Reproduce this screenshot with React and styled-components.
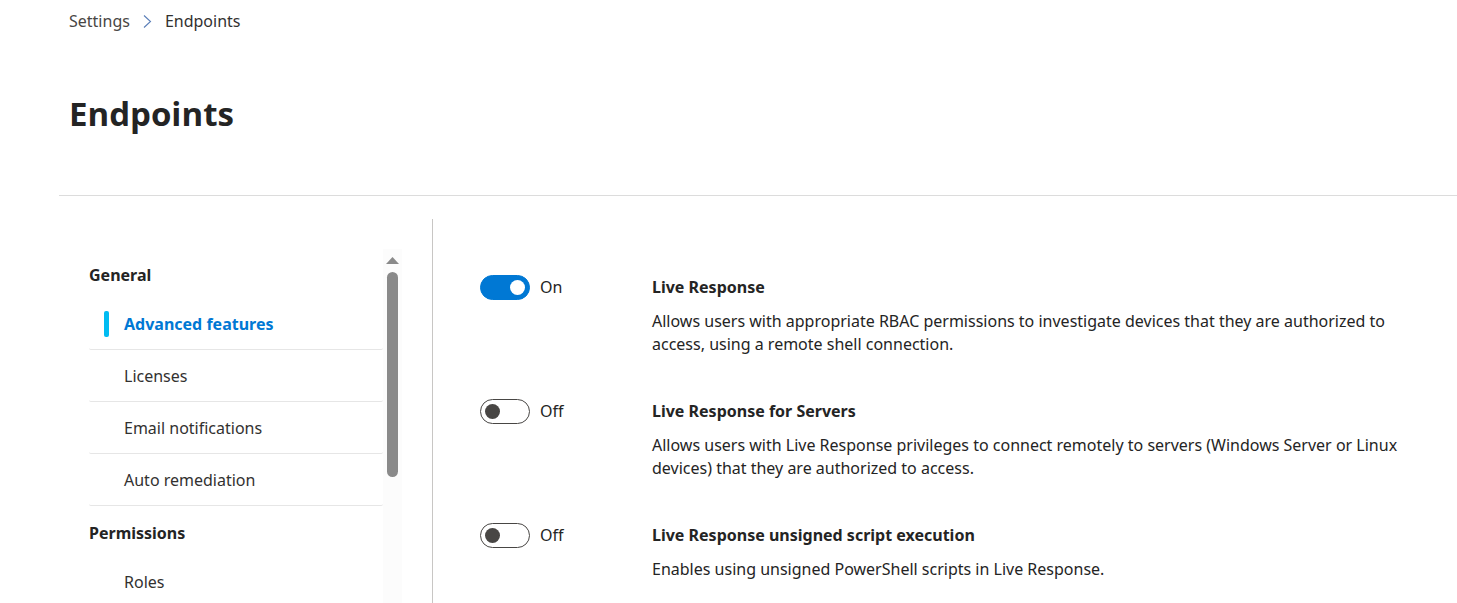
import React, { useState } from "react";
import styled, { createGlobalStyle } from "styled-components";

const GlobalStyle = createGlobalStyle`
  *, *::before, *::after { box-sizing: border-box; }
  body {
    margin: 0;
    background: #ffffff;
    color: #242424;
    font-family: "Segoe UI", "Noto Sans", sans-serif;
    font-size: 16px;
    line-height: 23px;
  }
`;

const Page = styled.div`
  display: flex;
  flex-direction: column;
  height: 100vh;
  overflow: hidden;
  padding-left: 59px;
`;

const Header = styled.header`
  flex: none;
  padding: 10px 10px 58px;
  border-bottom: 1px solid #dcdcdc;
`;

const Breadcrumb = styled.nav`
  display: flex;
  align-items: center;
  gap: 13px;
`;

const Crumb = styled.a`
  color: ${(p) => (p.$current ? "#323130" : "#484644")};
  text-decoration: none;
`;

const Title = styled.h1`
  margin: 57px 0 0;
  font-family: "Segoe UI", "Open Sans", sans-serif;
  font-size: 33px;
  line-height: 47px;
  font-weight: 700;
`;

const Body = styled.div`
  display: flex;
  flex: 1;
  min-height: 0;
  padding-top: 23px;
`;

const Sidebar = styled.aside`
  display: flex;
  flex: none;
  width: 374px;
  padding: 29px 30px 0;
  border-right: 1px solid #c8c6c4;
`;

const Menu = styled.nav`
  flex: 1;
  overflow: hidden;
`;

const GroupTitle = styled.h2`
  height: 50px;
  margin: 0;
  padding-top: 16px;
  font-size: 16px;
  font-weight: 700;
`;

const MenuList = styled.ul`
  margin: 0;
  padding: 0;
  list-style: none;
`;

const MenuLink = styled.a`
  display: flex;
  align-items: center;
  height: 52px;
  padding: 1px 0 0 15px;
  border-bottom: 1px solid #e6e6e6;
  border-radius: 2px;
  color: ${(p) => (p.$active ? "#0078d4" : "#323130")};
  font-weight: ${(p) => (p.$active ? 700 : 400)};
  text-decoration: none;

  &::before {
    content: "";
    width: 5px;
    height: 26px;
    margin-right: 15px;
    border-radius: 2px;
    background: ${(p) => (p.$active ? "#00bcf2" : "transparent")};
  }
`;

const Scrollbar = styled.div`
  display: flex;
  flex: none;
  flex-direction: column;
  align-items: center;
  gap: 8px;
  width: 19px;
  margin-top: 1px;
  padding-top: 8px;
  background: #fcfcfc;
`;

const ScrollThumb = styled.div`
  width: 11px;
  height: 205px;
  border-radius: 6px;
  background: #8a8a8a;
`;

const Settings = styled.main`
  display: flex;
  flex: 1;
  flex-direction: column;
  gap: 44px;
  min-width: 0;
  padding: 57px 24px 0 47px;
`;

const Setting = styled.section`
  display: grid;
  flex: none;
  grid-template-columns: 172px 1fr;
`;

const SwitchLabel = styled.label`
  display: flex;
  align-items: center;
  align-self: start;
  gap: 10px;
  height: 23px;
  cursor: pointer;
`;

const Switch = styled.input`
  display: flex;
  align-items: center;
  appearance: none;
  width: 50px;
  height: 25px;
  margin: 0;
  padding: 0 4px;
  border: 1px solid #484644;
  border-radius: 13px;
  background: #ffffff;
  cursor: pointer;

  &::before {
    content: "";
    width: 15px;
    height: 15px;
    border-radius: 50%;
    background: #484644;
  }

  &:checked {
    justify-content: flex-end;
    border-color: #0078d4;
    background: #0078d4;
  }

  &:checked::before {
    background: #ffffff;
  }
`;

const SettingTitle = styled.h3`
  margin: 0 0 11px;
  font-size: 16px;
  line-height: 23px;
  font-weight: 700;
`;

const Description = styled.p`
  margin: 0;
`;

const groups = [
  {
    title: "General",
    items: ["Advanced features", "Licenses", "Email notifications", "Auto remediation"],
  },
  { title: "Permissions", items: ["Roles"] },
];

const settings = [
  {
    id: "live-response",
    title: "Live Response",
    text: "Allows users with appropriate RBAC permissions to investigate devices that they are authorized to access, using a remote shell connection.",
    on: true,
  },
  {
    id: "live-response-servers",
    title: "Live Response for Servers",
    text: "Allows users with Live Response privileges to connect remotely to servers (Windows Server or Linux devices) that they are authorized to access.",
    on: false,
  },
  {
    id: "live-response-unsigned",
    title: "Live Response unsigned script execution",
    text: "Enables using unsigned PowerShell scripts in Live Response.",
    on: false,
  },
];

function SettingRow({ setting }) {
  const [on, setOn] = useState(setting.on);
  return (
    <Setting>
      <SwitchLabel>
        <Switch
          type="checkbox"
          role="switch"
          checked={on}
          onChange={(e) => setOn(e.target.checked)}
          aria-describedby={setting.id}
        />
        {on ? "On" : "Off"}
      </SwitchLabel>
      <div>
        <SettingTitle id={setting.id}>{setting.title}</SettingTitle>
        <Description>{setting.text}</Description>
      </div>
    </Setting>
  );
}

export default function App() {
  const [active, setActive] = useState("Advanced features");
  return (
    <>
      <GlobalStyle />
      <Page>
        <Header>
          <Breadcrumb aria-label="Breadcrumb">
            <Crumb href="#settings">Settings</Crumb>
            <svg width="9" height="14" viewBox="0 0 9 14" fill="none" aria-hidden="true">
              <path d="M1 0.5 7.5 6.5 1 12.5" stroke="#5b7fb8" strokeWidth="1.1" />
            </svg>
            <Crumb href="#endpoints" $current aria-current="page">
              Endpoints
            </Crumb>
          </Breadcrumb>
          <Title>Endpoints</Title>
        </Header>
        <Body>
          <Sidebar>
            <Menu aria-label="Endpoint settings">
              {groups.map((group) => (
                <React.Fragment key={group.title}>
                  <GroupTitle>{group.title}</GroupTitle>
                  <MenuList>
                    {group.items.map((item) => (
                      <li key={item}>
                        <MenuLink
                          href={"#" + item.toLowerCase().replace(/ /g, "-")}
                          $active={item === active}
                          onClick={() => setActive(item)}
                        >
                          {item}
                        </MenuLink>
                      </li>
                    ))}
                  </MenuList>
                </React.Fragment>
              ))}
            </Menu>
            <Scrollbar aria-hidden="true">
              <svg width="13" height="7" viewBox="0 0 13 7">
                <path d="M6.5 0 13 7H0z" fill="#8a8a8a" />
              </svg>
              <ScrollThumb />
            </Scrollbar>
          </Sidebar>
          <Settings>
            {settings.map((setting) => (
              <SettingRow key={setting.id} setting={setting} />
            ))}
          </Settings>
        </Body>
      </Page>
    </>
  );
}
